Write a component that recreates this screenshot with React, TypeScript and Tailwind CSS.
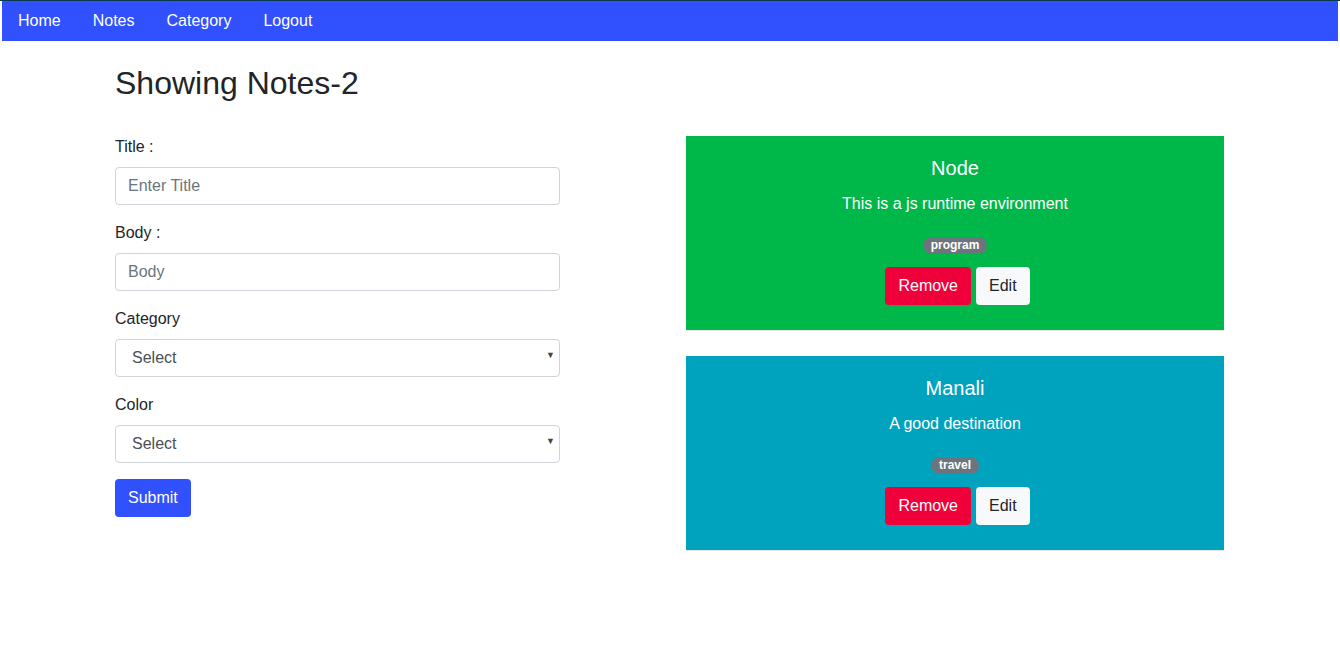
import React from 'react';

const notes = [
  { id: 1, title: 'Node', body: 'This is a js runtime environment', category: 'program', color: 'bg-[#00b74a]' },
  { id: 2, title: 'Manali', body: 'A good destination', category: 'travel', color: 'bg-[#00a3be]' },
];

function Field({ label, placeholder }: { label: string; placeholder: string }) {
  return (
    <div className="mb-4">
      <label className="block mb-2 leading-6">{label}</label>
      <input
        placeholder={placeholder}
        className="block w-full h-[38px] px-3 border border-[#ced4da] rounded-[4px] text-[#495057] placeholder:text-[#6c757d] outline-none"
      />
    </div>
  );
}

function SelectField({ label }: { label: string }) {
  return (
    <div className="mb-4">
      <label className="block mb-2 leading-6">{label}</label>
      <div className="relative">
        <select className="block w-full h-[38px] pl-4 pr-6 border border-[#ced4da] rounded-[4px] text-[#495057] bg-white appearance-none outline-none">
          <option>Select</option>
        </select>
        <span className="absolute right-[5px] top-[10px] text-[9px] text-[#444] pointer-events-none">▼</span>
      </div>
    </div>
  );
}

export default function App() {
  return (
    <div className="min-h-[656px] bg-white text-[#212529] text-base font-['Liberation_Sans',Arial,sans-serif]">
      <div className="h-px bg-[#0b3a4c]" />
      <nav className="mx-[2px] h-10 bg-[#3150fe] flex items-center pl-4 gap-8 text-white">
        <span>Home</span>
        <span>Notes</span>
        <span>Category</span>
        <span>Logout</span>
      </nav>

      <div className="w-[1110px] mx-auto pt-[23px]">
        <h2 className="text-[32px] leading-[38px] mb-[33px]">Showing Notes-2</h2>
        <div className="flex">
          {/* Form */}
          <div className="w-[445px]">
            <Field label="Title :" placeholder="Enter Title" />
            <Field label="Body :" placeholder="Body" />
            <SelectField label="Category" />
            <SelectField label="Color" />
            <button className="h-[38px] px-[13px] rounded-[4px] bg-[#3150fe] text-white">Submit</button>
          </div>

          {/* Notes */}
          <div className="ml-[125px] w-[540px] pl-px mt-px">
            {notes.map((n) => (
              <div key={n.id} className={`${n.color} w-[538px] h-[195px] mb-[25px] text-white text-center pt-5 border-b border-[#e6e6e6]`}>
                <h5 className="text-xl leading-6">{n.title}</h5>
                <p className="mt-[12px] leading-6">{n.body}</p>
                <div className="mt-[21px] flex justify-center">
                  <span className="inline-block px-2 py-[2px] rounded-full bg-[#6c757d] text-[12px] font-bold leading-[13px]">{n.category}</span>
                </div>
                <div className="mt-[13px] flex justify-center gap-[5px] pl-[5px]">
                  <button className="h-[38px] px-[13px] rounded-[4px] bg-[#f0003a] text-white">Remove</button>
                  <button className="h-[38px] px-[13px] rounded-[4px] bg-[#f8f9fa] text-[#212529]">Edit</button>
                </div>
              </div>
            ))}
          </div>
        </div>
      </div>
    </div>
  );
}
